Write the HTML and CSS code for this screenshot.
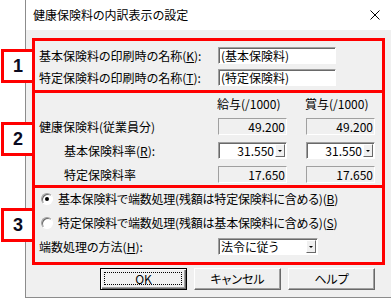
FILE: index.html
```html
<!DOCTYPE html>
<html lang="ja">
	<head>
		<meta charset="UTF-8" />
		<title>健康保険料の内訳表示の設定</title>
		<link rel="stylesheet" href="styles.css">
	</head>
	<body>
		<div class="screen">
			<div class="dialog">
				<div class="titlebar">
					<span class="title">健康保険料の内訳表示の設定</span>
					<svg class="close" width="10" height="10" viewBox="0 0 10 10">
						<path d="M0.5 0.5L9.5 9.5M9.5 0.5L0.5 9.5" stroke="#000" stroke-width="1" fill="none" />
					</svg>
				</div>
				<div class="body">
					<section class="group names">
						<span class="tag">1</span>
						<div class="row">
							<span class="label">基本保険料の印刷時の名称(<u>K</u>):</span>
							<div class="field edit">(基本保険料)</div>
						</div>
						<div class="row">
							<span class="label">特定保険料の印刷時の名称(<u>T</u>):</span>
							<div class="field edit">(特定保険料)</div>
						</div>
					</section>

					<section class="group rates">
						<span class="tag">2</span>
						<div class="rate-grid">
							<span></span>
							<span class="head">給与(/1000)</span>
							<span class="head">賞与(/1000)</span>

							<span class="label">健康保険料(従業員分)</span>
							<div class="field readonly">49.200</div>
							<div class="field readonly">49.200</div>

							<span class="label indent">基本保険料率(<u>R</u>):</span>
							<div class="field combo">
								<span class="value">31.550</span>
								<span class="drop"><i></i></span>
							</div>
							<div class="field combo">
								<span class="value">31.550</span>
								<span class="drop"><i></i></span>
							</div>

							<span class="label indent">特定保険料率</span>
							<div class="field readonly">17.650</div>
							<div class="field readonly">17.650</div>
						</div>
					</section>

					<section class="group rounding">
						<span class="tag">3</span>
						<div class="option">
							<span class="radio checked"></span>
							<span>基本保険料で端数処理(残額は特定保険料に含める)(<u>B</u>)</span>
						</div>
						<div class="option">
							<span class="radio"></span>
							<span>特定保険料で端数処理(残額は基本保険料に含める)(<u>S</u>)</span>
						</div>
						<div class="row">
							<span class="label">端数処理の方法(<u>H</u>):</span>
							<div class="field combo method">
								<span class="value">法令に従う</span>
								<span class="drop"><i></i></span>
							</div>
						</div>
					</section>

					<div class="buttons">
						<button class="btn default"><span>OK</span></button>
						<button class="btn">キャンセル</button>
						<button class="btn">ヘルプ</button>
					</div>
				</div>
			</div>
		</div>
	</body>
</html>
```

FILE: styles.css
```css
* {
	box-sizing: border-box;
}

body {
	margin: 0;
	background: #fff;
	color: #000;
	font-family: 'Noto Sans CJK JP', sans-serif;
	font-size: 12px;
	line-height: 14px;
	font-feature-settings: 'palt';
}

u {
	text-decoration: underline;
	text-underline-offset: 1px;
}

.screen {
	width: 391px;
	height: 299px;
	overflow: hidden;
}

.dialog {
	margin-left: 25px;
	height: 298px;
	border-left: 1px solid #8c8c8c;
	border-bottom: 1px solid #8c8c8c;
	background: #f0f0f0;
	display: flex;
	flex-direction: column;
}

.titlebar {
	height: 30px;
	background: #fff;
	display: flex;
	align-items: center;
	justify-content: space-between;
	padding: 0 11px 0 7px;
}

.close {
	display: block;
}

.body {
	width: 365px;
	padding: 8px 6px 0 6px;
}

/* red annotation boxes */
.group {
	position: relative;
	border: 3px solid #ff0000;
}

.group + .group {
	border-top: 0;
}

.tag {
	position: absolute;
	left: -34px;
	top: 50%;
	transform: translateY(-50%);
	width: 34px;
	height: 34px;
	border: 3px solid #ff0000;
	background: #fff;
	display: flex;
	align-items: center;
	justify-content: center;
	font-family: 'Liberation Sans', Arial, sans-serif;
	font-weight: bold;
	font-size: 18px;
	color: #0a0a20;
}

.names {
	height: 55px;
	padding: 6px 0 0 4px;
	display: flex;
	flex-direction: column;
	gap: 5px;
}

.row {
	display: flex;
	align-items: center;
	height: 17px;
}

.row .label {
	width: 179px;
	flex: none;
}

/* sunken fields */
.field {
	height: 17px;
	border: 1px solid;
	border-color: #a0a0a0 #fff #fff #a0a0a0;
	line-height: 15px;
	white-space: nowrap;
}

.edit {
	width: 118px;
	background: #fff;
	padding-left: 2px;
	box-shadow: inset 1px 1px #696969;
}

.readonly {
	text-align: right;
	padding-right: 1px;
}

.combo {
	display: flex;
	align-items: center;
	background: #fff;
	padding: 1px;
	box-shadow: inset 1px 1px #696969;
}

.combo .value {
	flex: 1;
	text-align: right;
	padding-right: 1px;
}

.drop {
	width: 10px;
	height: 13px;
	border: 1px solid;
	border-color: #fff #696969 #696969 #fff;
	background: #f0f0f0;
	display: flex;
	align-items: center;
	justify-content: center;
}

.drop i {
	width: 0;
	height: 0;
	border-left: 2px solid transparent;
	border-right: 2px solid transparent;
	border-top: 2px solid #000;
}

.rates {
	height: 95px;
	padding: 4px 0 0 4px;
}

.rate-grid {
	display: grid;
	grid-template-columns: 160px 69px 69px;
	grid-template-rows: 14px 17px 17px 17px;
	column-gap: 19px;
	row-gap: 7px;
	align-items: center;
	white-space: nowrap;
}

.head {
	margin-left: -1px;
}

.indent {
	padding-left: 25px;
}

.rounding {
	height: 77px;
	padding: 4px 0 0 4px;
	display: flex;
	flex-direction: column;
}

.option {
	display: flex;
	align-items: center;
	gap: 5px;
	height: 14px;
	margin: 0 0 10px 2px;
	white-space: nowrap;
	letter-spacing: -0.2px;
}

.rounding .row {
	margin-top: -2px;
}

.method {
	width: 100px;
}

.method .value {
	text-align: left;
	padding-left: 1px;
}

.radio {
	position: relative;
	width: 12px;
	height: 12px;
	border-radius: 50%;
	border: 1px solid;
	border-color: #a0a0a0 #fff #fff #a0a0a0;
	background: #fff;
	box-shadow: inset 1px 1px #696969;
}

.radio.checked::after {
	content: '';
	position: absolute;
	left: 3px;
	top: 3px;
	width: 4px;
	height: 4px;
	border-radius: 50%;
	background: #000;
}

.buttons {
	margin-top: 3px;
	display: flex;
	justify-content: flex-end;
	gap: 7px;
	padding-right: 10px;
}

.btn {
	width: 87px;
	height: 22px;
	padding: 0;
	font: inherit;
	color: #000;
	background: #f0f0f0;
	border: 1px solid;
	border-color: #fff #696969 #696969 #fff;
	box-shadow: inset -1px -1px #a0a0a0;
}

.btn.default {
	position: relative;
	border: 1px solid #000;
	box-shadow: inset 1px 1px #fff, inset -1px -1px #696969, inset -2px -2px #a0a0a0;
}

.btn.default::before {
	content: '';
	position: absolute;
	left: 3px;
	top: 3px;
	right: 4px;
	bottom: 4px;
	border: 1px dotted #000;
}
```
